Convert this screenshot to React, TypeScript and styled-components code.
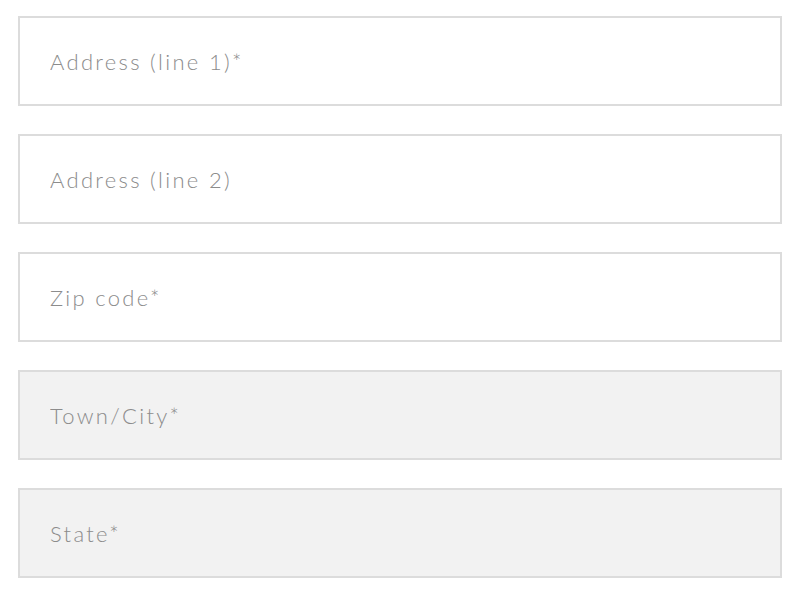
import React from "react";
import styled, { createGlobalStyle } from "styled-components";

const Global = createGlobalStyle`
  html, body { margin: 0; padding: 0; background: #fff; }
  * { box-sizing: border-box; }
`;

const Form = styled.form`
  display: flex;
  flex-direction: column;
  gap: 28px;
  width: 764px;
  margin: 16px 0 0 18px;
`;

const Field = styled.input<{ $muted?: boolean }>`
  display: block;
  width: 100%;
  height: 90px;
  margin: 0;
  padding: 0 30px;
  border: 2px solid #dcdcdc;
  border-radius: 0;
  outline: none;
  background: ${(p) => (p.$muted ? "#f2f2f2" : "#ffffff")};
  font-family: Lato, "Noto Sans", sans-serif;
  font-weight: 300;
  font-size: 22px;
  letter-spacing: 2.3px;
  color: #555;
  &::placeholder {
    color: #8c8c8c;
    opacity: 1;
  }
`;

export default function App() {
  return (
    <>
      <Global />
      <Form>
        <Field placeholder="Address (line 1)*" />
        <Field placeholder="Address (line 2)" />
        <Field placeholder="Zip code*" />
        <Field $muted placeholder="Town/City*" readOnly />
        <Field $muted placeholder="State*" readOnly />
      </Form>
    </>
  );
}
